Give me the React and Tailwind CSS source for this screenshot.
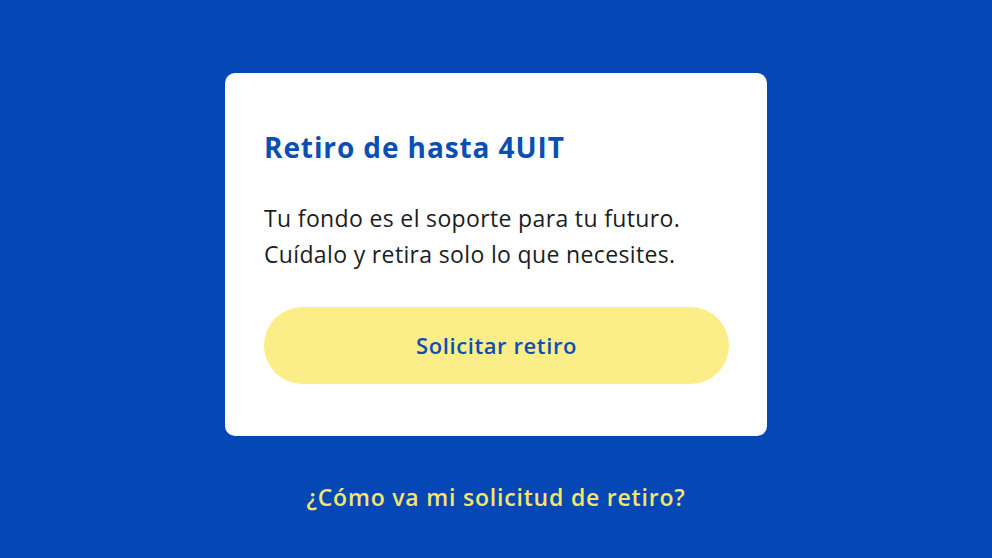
import React from "react";

const App = () => {
    return (
        <div className="w-full min-h-[558px] bg-[#0547b4] flex flex-col items-center pt-[73px] font-['Open_Sans',sans-serif]">
            <div className="w-[542px] h-[363px] bg-white rounded-[10px] px-[39px] pt-[56px] flex flex-col">
                <h1 className="text-[28px] leading-[36px] font-bold text-[#0b4fb3] tracking-[0.9px] whitespace-nowrap">
                    Retiro de hasta 4UIT
                </h1>
                <p className="mt-[35px] text-[23px] leading-[36px] text-[#1d1d1d] tracking-[0.35px] whitespace-nowrap">
                    Tu fondo es el soporte para tu futuro.<br />
                    Cuídalo y retira solo lo que necesites.
                </p>
                <button className="mt-[35px] w-[465px] h-[77px] rounded-full bg-[#fbed88] text-[#0b4fb3] text-[22px] font-semibold tracking-[0.6px] focus:outline-none">
                    Solicitar retiro
                </button>
            </div>
            <a href="#" className="mt-[46px] text-[23px] leading-[30px] font-semibold text-[#f4e66d] tracking-[0.8px]">
                ¿Cómo va mi solicitud de retiro?
            </a>
        </div>
    )
}

export default App;
